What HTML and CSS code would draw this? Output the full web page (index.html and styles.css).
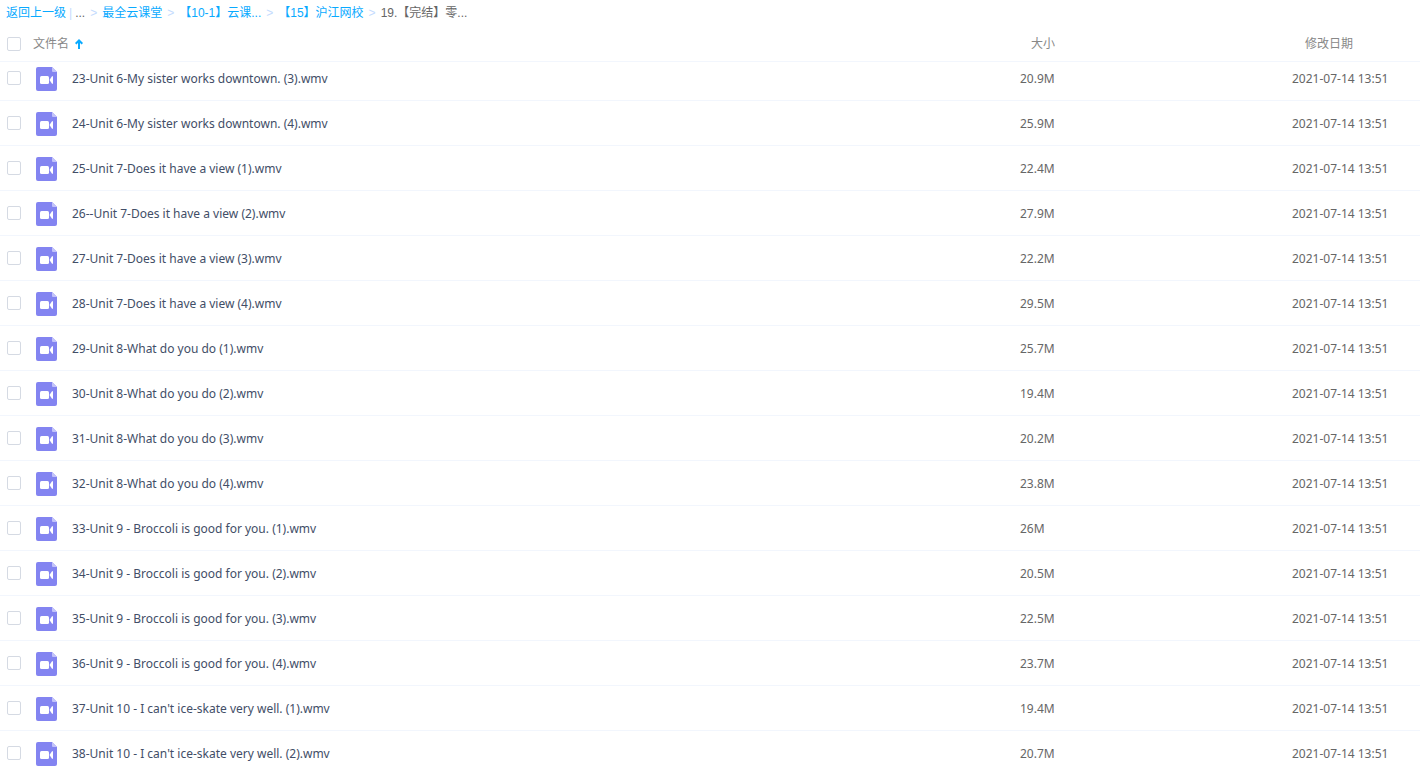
FILE: index.html
```html
<!DOCTYPE html>
<html lang="zh-CN">
<head>
<meta charset="utf-8">
<title>文件列表</title>
<link rel="stylesheet" href="styles.css">
</head>
<body>
<svg class="sprite" aria-hidden="true">
  <symbol id="video" viewBox="0 0 21 24">
    <path fill="#8384f1" d="M2 0h14l5 5v17a2 2 0 0 1-2 2H2a2 2 0 0 1-2-2V2a2 2 0 0 1 2-2z"/>
    <path fill="#c3c3fa" d="M16 0l5 5h-4a1 1 0 0 1-1-1z"/>
    <rect x="4" y="9" width="9" height="8" rx="1.500" fill="#fff"/>
    <path fill="#fff" d="M13.500 13L16 9.300h1v7.400h-1z"/>
  </symbol>
</svg>
<nav class="crumbs" aria-label="路径">
  <a href="#">返回上一级</a><span class="bar">|</span><span>...</span><span class="sep">&gt;</span><a href="#">最全云课堂</a><span class="sep">&gt;</span><a href="#">【10-1】云课...</a><span class="sep">&gt;</span><a href="#">【15】沪江网校</a><span class="sep">&gt;</span><span>19.【完结】零...</span>
</nav>
<table class="files">
  <thead>
    <tr>
      <th class="check"><input type="checkbox" aria-label="全选"></th>
      <th><button class="sort" type="button">文件名<svg class="arrow" viewBox="0 0 8 10" aria-hidden="true"><path d="M4 10V1.500M.7 4.800L4 1.500l3.300 3.300" fill="none" stroke="#09aaff" stroke-width="2"/></svg></button></th>
      <th class="size">大小</th>
      <th class="date">修改日期</th>
    </tr>
  </thead>
  <tbody id="rows"></tbody>
</table>
<script src="files.js"></script>
</body>
</html>
```
FILE: styles.css
```css
body {
  margin: 0;
  background: #fff;
  color: #424e67;
  font: 12px/18px "Noto Sans", "Noto Sans CJK SC", sans-serif;
}

.sprite {
  display: none;
}

.crumbs {
  display: flex;
  box-sizing: border-box;
  height: 24px;
  padding: 1px 0 0 6px;
  align-items: center;
  white-space: nowrap;
  color: #666;
  font-family: "Liberation Sans", "Noto Sans CJK SC", sans-serif;
}

.crumbs a {
  color: #09aaff;
  text-decoration: none;
}

.bar {
  margin: 0 3px;
  color: #c4dbfe;
}

.sep {
  margin: 0 5px;
  color: #c4dbfe;
}

.files {
  width: 100%;
  table-layout: fixed;
  border-collapse: separate;
  border-spacing: 0;
}

.files th,
.files td {
  box-sizing: border-box;
  height: 45px;
  padding: 2px 0 0;
  border-bottom: 1px solid #f2f6fd;
  text-align: left;
  vertical-align: middle;
  font-weight: 400;
  white-space: nowrap;
}

.files th {
  height: 38px;
  color: #888;
}

.files td.check {
  padding-top: 0;
}

.files tbody tr:first-child td {
  height: 39px;
  padding-top: 0;
  padding-bottom: 5px;
}

.files tbody tr:first-child td.check {
  padding-bottom: 7px;
}

.files tbody tr:last-child td {
  height: 44px;
  border-bottom: 0;
}

.files .check {
  width: 33px;
  padding-left: 7px;
}

.files .size {
  width: 272px;
}

.files .date {
  width: 128px;
}

.files th.size {
  padding-left: 11px;
}

.files th.date {
  padding-left: 13px;
}

.files td.size,
.files td.date {
  color: #666;
}

input {
  display: block;
  appearance: none;
  box-sizing: border-box;
  width: 14px;
  height: 14px;
  margin: 0;
  border: 1px solid #d5dae3;
  border-radius: 2px;
  background: #fff;
}

input:checked {
  border-color: #09aaff;
  background: #09aaff;
}

.sort {
  display: flex;
  align-items: center;
  gap: 6px;
  padding: 0;
  border: 0;
  background: none;
  color: inherit;
  font: inherit;
}

.arrow {
  width: 8px;
  height: 10px;
}

.name {
  display: flex;
  align-items: center;
  gap: 15px;
  padding-left: 3px;
}

.icon {
  width: 21px;
  height: 24px;
}
```
FILE: files.js
```js
const files = [
  ["23-Unit 6-My sister works downtown. (3).wmv", "20.9M"],
  ["24-Unit 6-My sister works downtown. (4).wmv", "25.9M"],
  ["25-Unit 7-Does it have a view (1).wmv", "22.4M"],
  ["26--Unit 7-Does it have a view (2).wmv", "27.9M"],
  ["27-Unit 7-Does it have a view (3).wmv", "22.2M"],
  ["28-Unit 7-Does it have a view (4).wmv", "29.5M"],
  ["29-Unit 8-What do you do (1).wmv", "25.7M"],
  ["30-Unit 8-What do you do (2).wmv", "19.4M"],
  ["31-Unit 8-What do you do (3).wmv", "20.2M"],
  ["32-Unit 8-What do you do (4).wmv", "23.8M"],
  ["33-Unit 9 - Broccoli is good for you. (1).wmv", "26M"],
  ["34-Unit 9 - Broccoli is good for you. (2).wmv", "20.5M"],
  ["35-Unit 9 - Broccoli is good for you. (3).wmv", "22.5M"],
  ["36-Unit 9 - Broccoli is good for you. (4).wmv", "23.7M"],
  ["37-Unit 10 - I can't ice-skate very well. (1).wmv", "19.4M"],
  ["38-Unit 10 - I can't ice-skate very well. (2).wmv", "20.7M"]
];

document.getElementById("rows").innerHTML = files.map(([name, size], i) => `
  <tr>
    <td class="check"><input type="checkbox" id="file-${i}"></td>
    <td><label class="name" for="file-${i}"><svg class="icon" aria-hidden="true"><use href="#video"/></svg>${name}</label></td>
    <td class="size">${size}</td>
    <td class="date">2021-07-14 13:51</td>
  </tr>`).join("");
```
